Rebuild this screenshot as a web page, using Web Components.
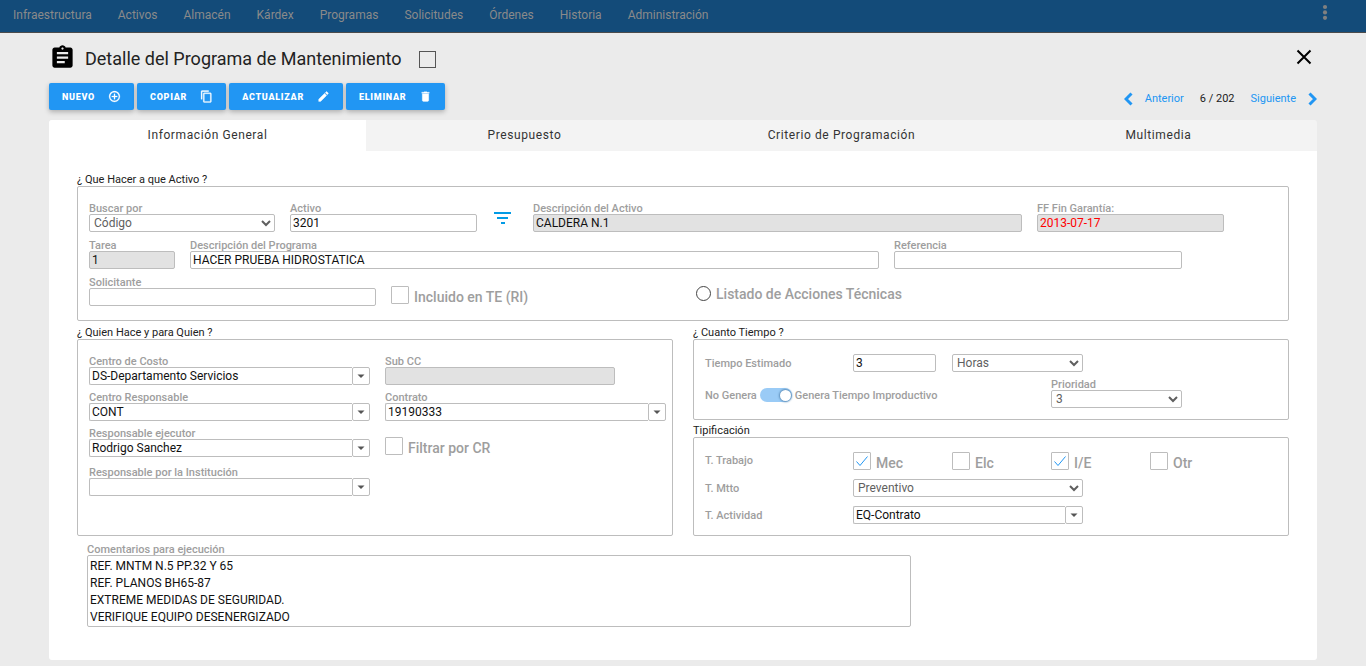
<!DOCTYPE html>
<html lang="es">
<head>
<meta charset="utf-8">
<title>Detalle del Programa de Mantenimiento</title>
<style>
  body { margin: 0; background: #ebebeb; font-family: Roboto, "Liberation Sans", sans-serif; font-size: 12px; color: #212121; }
</style>
</head>
<body>
<top-bar></top-bar>
<maintenance-page></maintenance-page>

<script>
const define = (name, render) => customElements.define(name, class extends HTMLElement {
  connectedCallback() {
    if (this.shadowRoot) return;
    this.attachShadow({ mode: "open" }).innerHTML = render(this);
  }
});
const attr = (el, name) => el.getAttribute(name) || "";

const CONTROL = `
  * { box-sizing: border-box; }
  label { height: 12px; color: #9e9e9e; font-size: 11px; font-weight: 500; line-height: 14px; white-space: nowrap; }
  input, select { display: block; width: 100%; height: 18px; margin: 0; padding: 0 2px; border: 1px solid #bdbdbd;
    border-radius: 2px; background: #fff; color: #111; font: 400 12px Roboto, sans-serif; outline: none; min-width: 0; }
  select { color: #5f5f5f; padding: 0; }
  input:disabled { background: #e2e2e2; }
`;

define("top-bar", () => `
  <style>
    :host { display: flex; box-sizing: border-box; height: 33px; padding: 0 38px 0 13px; align-items: flex-start;
      justify-content: space-between; background: #134b79; border-bottom: 1px solid #4b4b4b; }
    nav { display: flex; gap: 26px; }
    a { color: #8a8a8a; text-decoration: none; font-size: 12px; line-height: 30px; font-weight: 400; }
    button { border: 0; padding: 4px 0 0; background: none; }
    svg { display: block; fill: #808080; }
  </style>
  <nav>${["Infraestructura", "Activos", "Almacén", "Kárdex", "Programas", "Solicitudes", "Órdenes", "Historia", "Administración"]
    .map(t => `<a href="#">${t}</a>`).join("")}</nav>
  <button aria-label="Más opciones"><svg width="6" height="17"><circle cx="3" cy="3" r="2.1"/><circle cx="3" cy="8.4" r="2.1"/><circle cx="3" cy="13.8" r="2.1"/></svg></button>`);

const ICONS = {
  add: '<path d="M13 7h-2v4H7v2h4v4h2v-4h4v-2h-4V7zm-1-5C6.48 2 2 6.48 2 12s4.48 10 10 10 10-4.48 10-10S17.52 2 12 2zm0 18c-4.41 0-8-3.59-8-8s3.59-8 8-8 8 3.59 8 8-3.59 8-8 8z"/>',
  copy: '<path d="M16 1H4c-1.1 0-2 .9-2 2v14h2V3h12V1zm3 4H8c-1.1 0-2 .9-2 2v14c0 1.1.9 2 2 2h11c1.1 0 2-.9 2-2V7c0-1.1-.9-2-2-2zm0 16H8V7h11v14z"/>',
  edit: '<path d="M3 17.25V21h3.75L17.81 9.94l-3.75-3.75L3 17.25zM20.71 7.04c.39-.39.39-1.02 0-1.41l-2.34-2.34c-.39-.39-1.02-.39-1.41 0l-1.83 1.83 3.75 3.75 1.83-1.83z"/>',
  trash: '<path d="M6 19c0 1.1.9 2 2 2h8c1.1 0 2-.9 2-2V7H6v12zM19 4h-3.5l-1-1h-5l-1 1H5v2h14V4z"/>'
};

define("action-button", el => `
  <style>
    :host { display: block; }
    button { display: flex; align-items: center; gap: 13px; height: 27px; padding: 0 13px; border: 0; border-radius: 2px;
      background: #2196f3; color: #fff; font: 900 9px Roboto, sans-serif; letter-spacing: 0.08em; text-transform: uppercase;
      box-shadow: 0 2px 5px rgba(0,0,0,.26); }
    svg { width: 13px; height: 13px; fill: #fff; stroke: #fff; stroke-width: 0.5; }
  </style>
  <button><slot></slot><svg viewBox="0 0 24 24" aria-hidden="true">${ICONS[attr(el, "icon")]}</svg></button>`);

define("page-header", () => `
  <style>
    :host { display: block; padding: 11px 0 10px; }
    .title, .tools, .actions, .pager { display: flex; align-items: center; }
    .title { height: 30px; }
    .mark { width: 27px; height: 27px; margin: 0 9px 3px 0; }
    h1 { margin: 0; font-size: 18px; line-height: 30px; font-weight: 400; color: #222; }
    .title input { appearance: none; width: 17px; height: 17px; margin: 1px auto 0 17px; border: 1px solid #555; background: none; }
    .close { border: 0; padding: 0; margin: 0 5px 4px 0; background: none; }
    svg { display: block; }
    .tools { justify-content: space-between; padding-top: 9px; }
    .actions { gap: 3px; }
    .pager { gap: 10px; font-size: 11px; margin-top: 4px; }
    .pager a { display: flex; align-items: center; gap: 12px; color: #2196f3; text-decoration: none; }
    .pager span { padding: 0 6px; }
    .pager path { fill: none; stroke: #2196f3; stroke-width: 3; }
  </style>
  <div class="title">
    <svg class="mark" viewBox="0 0 24 24" aria-hidden="true"><path d="M19 3h-4.18C14.4 1.84 13.3 1 12 1s-2.4.84-2.82 2H5c-1.1 0-2 .9-2 2v14c0 1.1.9 2 2 2h14c1.1 0 2-.9 2-2V5c0-1.1-.9-2-2-2zm-7 0c.55 0 1 .45 1 1s-.45 1-1 1-1-.45-1-1 .45-1 1-1zm2 14H7v-2h7v2zm3-4H7v-2h10v2zm0-4H7V7h10v2z"/></svg>
    <h1>Detalle del Programa de Mantenimiento</h1>
    <input type="checkbox" aria-label="Marcar programa">
    <button class="close" aria-label="Cerrar"><svg width="16" height="16"><path d="M1.5 1.5l13 13M14.5 1.5l-13 13" stroke="#000" stroke-width="2"/></svg></button>
  </div>
  <div class="tools">
    <div class="actions">
      <action-button icon="add">Nuevo</action-button>
      <action-button icon="copy">Copiar</action-button>
      <action-button icon="edit">Actualizar</action-button>
      <action-button icon="trash">Eliminar</action-button>
    </div>
    <div class="pager">
      <a href="#"><svg width="9" height="14"><path d="M7.5 1.5L2 7l5.5 5.5"/></svg>Anterior</a>
      <span>6 / 202</span>
      <a href="#">Siguiente<svg width="9" height="14"><path d="M1.5 1.5L7 7l-5.5 5.5"/></svg></a>
    </div>
  </div>`);

define("tab-bar", () => `
  <style>
    :host { display: grid; grid-template-columns: repeat(4, 1fr); background: #f3f3f3; border-radius: 3px 3px 0 0; overflow: hidden; }
    button { height: 31px; border: 0; padding: 0 0 2px; background: none; color: #333; font: 400 12px Roboto, sans-serif; letter-spacing: 0.05em; }
    button[aria-selected=true] { background: #fff; }
  </style>
  ${["Información General", "Presupuesto", "Criterio de Programación", "Multimedia"]
    .map((t, i) => `<button role="tab" aria-selected="${i === 0}">${t}</button>`).join("")}`);

define("group-box", el => `
  <style>
    :host { display: flex; }
    fieldset { display: flex; flex-direction: column; flex: 1; min-width: 0; margin: 0; padding: 0; border: 0; }
    legend { height: 14px; padding: 0; font-size: 11px; line-height: 16px; color: #212121; }
    div { flex: 1; padding: var(--box-padding, 14px 11px 11px); border: 1px solid #bdbdbd; border-radius: 2px; }
  </style>
  <fieldset><legend>${attr(el, "label")}</legend><div><slot></slot></div></fieldset>`);

/* Text box or drop-down with its label above it, or at its left with "inline" (inside a parent grid). */
define("form-field", el => {
  const hint = el.hasAttribute("hint") ? ` aria-label="${attr(el, "hint")}"` : "";
  const control = el.hasAttribute("options")
    ? `<select id="c"${hint}>${attr(el, "options").split("|").map(o => `<option>${o}</option>`).join("")}</select>`
    : `<input id="c"${hint} type="text" value="${attr(el, "value")}"${el.hasAttribute("disabled") ? " disabled" : ""}>`;
  const label = el.hasAttribute("label") ? `<label for="c">${attr(el, "label")}</label>` : "";
  return `
  <style>${CONTROL}
    :host { display: block; min-width: 0; }
    :host([inline]) { display: grid; grid-template-columns: subgrid; align-items: center; }
    :host([inline]) #c { grid-column: 2 / -1; width: var(--control-width, 100%); }
    label { display: block; }
    :host([alert]) input { color: #f00; }
  </style>${label}${control}`;
});

define("combo-field", el => `
  <style>${CONTROL}
    :host { display: block; min-width: 0; }
    :host([inline]) { display: grid; grid-template-columns: subgrid; align-items: center; }
    :host([inline]) .combo { grid-column: 2 / -1; width: var(--control-width, 100%); }
    label { display: block; }
    .combo { display: flex; }
    input { flex: 1; border-right: 0; border-radius: 2px 0 0 2px; }
    button { width: 18px; height: 18px; padding: 0; border: 1px solid #bdbdbd; border-radius: 2px; background: #fff; }
    svg { display: block; margin: auto; }
  </style>
  <label for="c">${attr(el, "label")}</label>
  <div class="combo"><input id="c" type="text" value="${attr(el, "value")}"><button aria-label="Desplegar"><svg width="8" height="4"><path d="M0.5 0.5h7L4 4z" fill="#555"/></svg></button></div>`);

define("check-field", el => {
  const type = attr(el, "type") || "checkbox";
  return `
  <style>
    :host { display: flex; align-items: flex-start; gap: 5px; height: 18px; }
    input { appearance: none; flex: none; width: 18px; height: 18px; margin: 0; border: 1px solid #bdbdbd; border-radius: 1px; background: #fff center no-repeat; }
    input:checked { background-image: url("data:image/svg+xml,%3Csvg xmlns='http://www.w3.org/2000/svg' width='14' height='12'%3E%3Cpath d='M1.5 6.5L5 10.5L12.5 1.5' fill='none' stroke='%232196f3'/%3E%3C/svg%3E"); }
    input[type=radio] { width: 15px; height: 15px; border-color: #444; border-radius: 50%; }
    label { font-size: 14px; line-height: 22px; font-weight: 500; color: #9e9e9e; white-space: nowrap; }
    input[type=radio] + label { line-height: 16px; }
  </style>
  <input id="c" type="${type}"${el.hasAttribute("checked") ? " checked" : ""}><label for="c">${attr(el, "label")}</label>`;
});

define("switch-field", el => `
  <style>
    :host { display: flex; align-items: center; gap: 3px; font-size: 11px; font-weight: 500; color: #9e9e9e; white-space: nowrap; }
    input { appearance: none; display: flex; align-items: center; justify-content: flex-end; width: 32px; height: 14px; margin: 0; border-radius: 7px; background: #9acbf6; }
    input::before { content: ""; width: 11px; height: 11px; margin-right: 1px; border-radius: 50%; background: #fff; box-shadow: 0 0 2px 1px #5c8db8; }
  </style>
  <label for="c">${attr(el, "off")}</label><input id="c" type="checkbox" checked><label for="c">${attr(el, "on")}</label>`);

define("comment-field", el => `
  <style>${CONTROL}
    :host { display: block; }
    label { display: block; }
    textarea { display: block; width: 100%; height: 72px; margin: 0; padding: 2px; border: 1px solid #bdbdbd; border-radius: 2px;
      color: #111; font: 400 12px/17px Roboto, sans-serif; resize: none; overflow: hidden; outline: none; }
  </style>
  <label for="c">${attr(el, "label")}</label><textarea id="c">${el.textContent.trim()}</textarea>`);

define("maintenance-page", () => `
  <style>
    :host { display: block; padding: 0 49px 6px; }
    main { display: grid; grid-template-columns: 1fr 1fr; gap: 4px 20px; padding: 21px 28px 33px; background: #fff; border-radius: 0 0 3px 3px; }
    .asset { grid-column: 1 / -1; --box-padding: 15px 11px 14px; }
    .asset .stack { display: grid; gap: 7px; }
    .row { display: grid; gap: 15px; }
    .r1 { grid-template-columns: 186fr 187fr 26px 489fr 187fr 38fr; }
    .r2 { grid-template-columns: 86fr 689fr 288fr 80fr; }
    .r3 { grid-template-columns: 287fr 290fr 581fr; }
    .r3 check-field { padding-top: 10px; }
    .filter { align-self: center; justify-self: start; margin: 2px 0 0 2px; padding: 0; border: 0; background: none; }
    .filter svg { display: block; }
    .who { --box-padding: 15px 6px 11px 11px; }
    .people { display: grid; grid-template-columns: 1fr 1fr; gap: 6px 15px; }
    .people .narrow { width: 82%; }
    .people check-field { padding-top: 10px; }
    .people .last { padding-top: 3px; }
    .side { display: flex; flex-direction: column; gap: 3px; }
    .cols { display: grid; grid-template-columns: 132fr repeat(4, 83fr) 28fr; column-gap: 16px; }
    .time { row-gap: 6px; }
    .kind { row-gap: 9px; }
    .estimate { grid-column: 1 / 3; }
    .unit { grid-column: 3 / 5; width: 72%; }
    .idle { grid-column: 1 / 4; height: 26px; align-self: end; }
    .priority { grid-column: 4 / 6; width: 72%; }
    .wide { grid-column: 1 / 5; --control-width: 82%; }
    .caption { font-size: 11px; line-height: 18px; font-weight: 500; color: #9e9e9e; }
    comment-field { grid-column: 1 / -1; width: 68%; margin: 3px 10px 0; }
  </style>
  <page-header></page-header>
  <tab-bar role="tablist"></tab-bar>
  <main>
    <group-box class="asset" label="¿ Que Hacer a que Activo ?">
      <div class="stack">
        <div class="row r1">
          <form-field label="Buscar por" options="Código"></form-field>
          <form-field label="Activo" value="3201"></form-field>
          <button class="filter" aria-label="Filtrar activos"><svg width="17" height="12"><path d="M0 1h17M3 6h11M7 11h4" stroke="#039be5" stroke-width="2"/></svg></button>
          <form-field label="Descripción del Activo" value="CALDERA N.1" disabled></form-field>
          <form-field label="FF Fin Garantía:" value="2013-07-17" disabled alert></form-field>
        </div>
        <div class="row r2">
          <form-field label="Tarea" value="1" disabled></form-field>
          <form-field label="Descripción del Programa" value="HACER PRUEBA HIDROSTATICA"></form-field>
          <form-field label="Referencia"></form-field>
        </div>
        <div class="row r3">
          <form-field label="Solicitante"></form-field>
          <check-field label="Incluido en TE (RI)"></check-field>
          <check-field type="radio" label="Listado de Acciones Técnicas"></check-field>
        </div>
      </div>
    </group-box>
    <group-box class="who" label="¿ Quien Hace y para Quien ?">
      <div class="people">
        <combo-field label="Centro de Costo" value="DS-Departamento Servicios"></combo-field>
        <form-field class="narrow" label="Sub CC" disabled></form-field>
        <combo-field label="Centro Responsable" value="CONT"></combo-field>
        <combo-field label="Contrato" value="19190333"></combo-field>
        <combo-field label="Responsable ejecutor" value="Rodrigo Sanchez"></combo-field>
        <check-field label="Filtrar por CR"></check-field>
        <combo-field class="last" label="Responsable por la Institución"></combo-field>
      </div>
    </group-box>
    <div class="side">
      <group-box label="¿ Cuanto Tiempo ?">
        <div class="cols time">
          <form-field inline class="estimate" label="Tiempo Estimado" value="3"></form-field>
          <form-field class="unit" hint="Unidad de tiempo" options="Horas"></form-field>
          <switch-field class="idle" off="No Genera" on="Genera Tiempo Improductivo"></switch-field>
          <form-field class="priority" label="Prioridad" options="3"></form-field>
        </div>
      </group-box>
      <group-box label="Tipificación">
        <div class="cols kind">
          <span class="caption">T. Trabajo</span>
          <check-field label="Mec" checked></check-field>
          <check-field label="Elc"></check-field>
          <check-field label="I/E" checked></check-field>
          <check-field label="Otr"></check-field>
          <form-field inline class="wide" label="T. Mtto" options="Preventivo"></form-field>
          <combo-field inline class="wide" label="T. Actividad" value="EQ-Contrato"></combo-field>
        </div>
      </group-box>
    </div>
    <comment-field label="Comentarios para ejecución">REF. MNTM N.5 PP.32 Y 65
REF. PLANOS BH65-87
EXTREME MEDIDAS DE SEGURIDAD.
VERIFIQUE EQUIPO DESENERGIZADO</comment-field>
  </main>`);
</script>
</body>
</html>
